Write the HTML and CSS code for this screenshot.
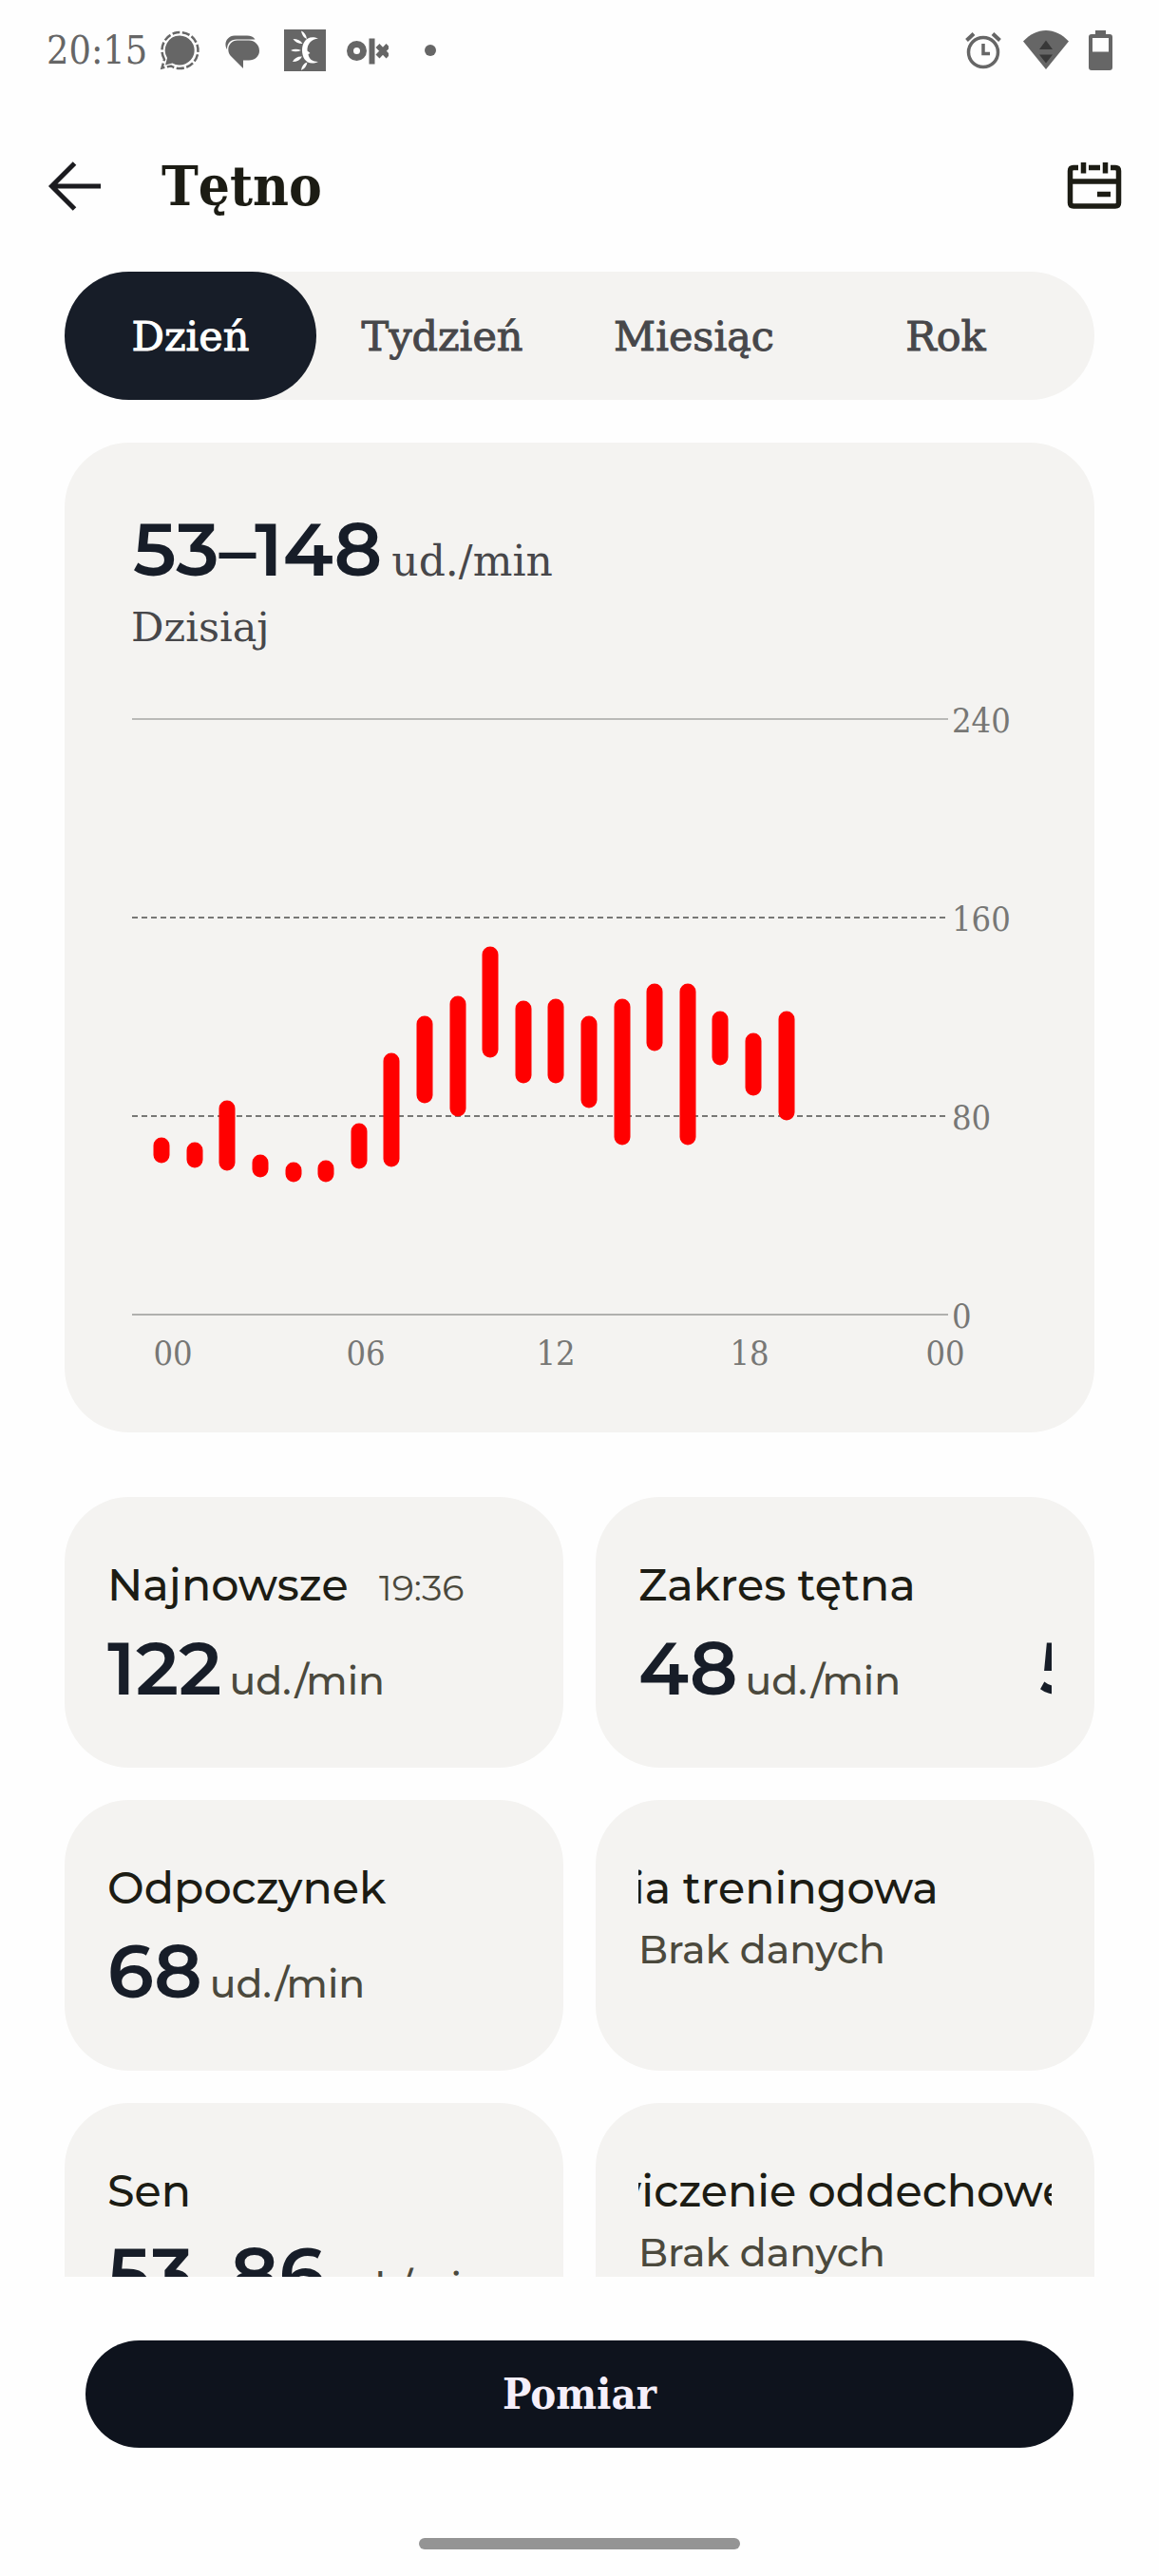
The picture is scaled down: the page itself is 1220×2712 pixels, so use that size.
FILE: index.html
```html
<!DOCTYPE html>
<html lang="pl">
<head>
<meta charset="utf-8">
<meta name="viewport" content="width=device-width, initial-scale=1">
<title>Tętno</title>
<link rel="stylesheet" href="styles.css">
</head>
<body>
<div class="status">
  <span class="clock">20:15</span>
  <div class="notices">
    <svg width="44" height="44" viewBox="0 0 44 44" aria-hidden="true">
      <path d="M22 6.500a15.500 15.500 0 1 1-7.500 29L7 37.500l2-7.500A15.500 15.500 0 0 1 22 6.500z" fill="#666"/>
      <path d="M6 31.500A19 19 0 1 1 13 38.500L3.500 40.500z" fill="none" stroke="#666" stroke-width="2.500" stroke-dasharray="8 2.500"/>
    </svg>
    <svg width="44" height="44" viewBox="0 0 44 44" aria-hidden="true">
      <path d="M6 21c-4-6 0-14.500 8-14.500h13c4 0 7 1.500 8.500 4H16c-6 0-10 4-10 10.500z" fill="#666"/>
      <path d="M17 11.500h12a11 11 0 0 1 11 11c0 6-5 10-11 10h-6V41L9.500 27.500C4.500 21 8.500 11.500 17 11.500z" fill="#666"/>
    </svg>
    <svg width="44" height="44" viewBox="0 0 44 44" aria-hidden="true">
      <path d="M0 0h44v44H0z" fill="#666"/>
      <path d="M36 9.500C24 5 19 14 19 22c0 9 6 17 17 12-6 0-10-3-10.500-8l2-1-3-2.500c-.5-7 4.500-12.500 11.500-13z" fill="#fff"/>
      <path d="M18 1.500q5 2 6 8.500-5-2-6-8.500zM9.500 10q7 0 10 5-7 0-10-5zM7 22q5-2.500 11 0-6 2.500-11 0zM9 34q3-6 10-5.500-3 5.500-10 5.500zM18 43q1-7 6.500-8.500-1 6-6.500 8.500z" fill="#fff"/>
    </svg>
    <svg width="44" height="44" viewBox="0 0 44 44" aria-hidden="true">
      <circle cx="10.500" cy="22.500" r="7" fill="none" stroke="#666" stroke-width="7"/>
      <path d="M26.500 9.500v27" stroke="#666" stroke-width="6"/>
      <path d="M32.500 17l11 11.500M43.500 17l-11 11.500" stroke="#666" stroke-width="5.500"/>
    </svg>
    <span class="more"></span>
  </div>
  <div class="system">
    <svg width="44" height="44" viewBox="0 0 44 44" aria-hidden="true">
      <g fill="none" stroke="#666"><circle cx="22" cy="24" r="15.500" stroke-width="3.500"/><path d="M22 15v10.500h7" stroke-width="3.500"/><path d="M4.500 11.500l7.500-7M39.500 11.500l-7.500-7" stroke-width="4"/></g>
    </svg>
    <svg width="50" height="44" viewBox="0 0 50 44" aria-hidden="true">
      <path d="M1 12.500c14-15.500 34-15.500 48 0L25 42z" fill="#666"/>
      <path d="M18 21l7-9.500L32 21zM18 26.500h14L25 35.500z" fill="#383838"/>
    </svg>
    <svg width="26" height="44" viewBox="0 0 26 44" aria-hidden="true">
      <path fill-rule="evenodd" d="M8 1h11v4h4q3 0 3 3v32q0 3-3 3H4q-3 0-3-3V8q0-3 3-3h4zM5 9v14.500h17V9z" fill="#666"/>
    </svg>
  </div>
</div>

<header class="appbar">
  <button class="icon-btn" type="button" aria-label="Wstecz">
    <svg width="60" height="60" viewBox="0 0 60 60" aria-hidden="true"><path d="M58 30H7M30.500 6L6.500 30l24 24" fill="none" stroke="#1b1b1f" stroke-width="5"/></svg>
  </button>
  <h1>Tętno</h1>
  <button class="icon-btn" type="button" aria-label="Kalendarz">
    <svg width="60" height="52" viewBox="0 0 60 52" aria-hidden="true"><g fill="none" stroke="#1c1c14" stroke-width="5.500"><path d="M13 6.500H8Q4.500 6.500 4.500 10v33.500Q4.500 47 8 47h44q3.500 0 3.500-3.500V10q0-3.500-3.500-3.500h-5M24 6.500h12"/><path d="M4.500 21h51M18.500 1v11.500M41.500 1v11.500M33 34.500h14"/></g></svg>
  </button>
</header>

<main class="content">
  <nav class="tabs" aria-label="Zakres czasu">
    <button class="tab active" type="button">Dzień</button>
    <button class="tab" type="button">Tydzień</button>
    <button class="tab" type="button">Miesiąc</button>
    <button class="tab" type="button">Rok</button>
  </nav>

  <section class="chart-card">
    <p class="range"><strong class="value">53–148</strong> <span class="range-unit">ud./min</span></p>
    <p class="day">Dzisiaj</p>
    <svg class="chart" viewBox="0 0 948 720" role="img" aria-label="Tętno w ciągu dnia">
      <g fill="none" stroke-width="2">
        <path d="M3 30h859" stroke="#b9b9b7"/>
        <path d="M3 239h856M3 448h856" stroke="#777775" stroke-dasharray="6 4"/>
        <path d="M3 657h859" stroke="#b0b0ae"/>
      </g>
      <g class="bars">
        <path d="M34 479v10M69 484v10M103 440v57M138 497v7M173 505v4M207 503v6M242 464v31M276 390v103M311 351v75M346 330v110M380 278v100M415 335v70M449 333v72M484 351v80M519 333v137M553 317v54M588 317v153M622 346v40M657 369v49M692 346v98"/>
      </g>
      <g class="axis">
        <text x="866" y="44">240</text><text x="866" y="253">160</text><text x="866" y="462">80</text><text x="866" y="671">0</text>
      </g>
      <g class="axis hours">
        <text x="46" y="710">00</text><text x="249" y="710">06</text><text x="449" y="710">12</text><text x="653" y="710">18</text><text x="859" y="710">00</text>
      </g>
    </svg>
  </section>

  <section class="stats">
    <article class="stat">
      <h2>Najnowsze <time>19:36</time></h2>
      <p class="reading"><strong class="value">122</strong> <span class="unit">ud./min</span></p>
    </article>
    <article class="stat">
      <h2>Zakres tętna</h2>
      <p class="reading"><strong class="value">48</strong> <span class="unit">ud./min</span> <strong class="value next">53</strong></p>
    </article>
    <article class="stat">
      <h2>Odpoczynek</h2>
      <p class="reading"><strong class="value">68</strong> <span class="unit">ud./min</span></p>
    </article>
    <article class="stat">
      <h2><span class="scrolled short">ia treningowa</span></h2>
      <p class="empty">Brak danych</p>
    </article>
    <article class="stat">
      <h2>Sen</h2>
      <p class="reading"><strong class="value">53–86</strong> <span class="unit">ud./min</span></p>
    </article>
    <article class="stat">
      <h2><span class="scrolled long">wiczenie oddechowe</span></h2>
      <p class="empty">Brak danych</p>
    </article>
  </section>
</main>

<footer class="footer">
  <button class="measure" type="button">Pomiar</button>
  <div class="handle"></div>
</footer>
</body>
</html>
```

FILE: styles.css
```css
* { box-sizing: border-box; }

body {
  margin: 0;
  height: 100vh;
  display: flex;
  flex-direction: column;
  background: #fefefe;
  color: #1c1c14;
  font-family: "Roboto Slab", "DejaVu Serif", serif;
}

h1, h2, p { margin: 0; font-weight: 400; }
button { border: 0; padding: 0; background: none; font: inherit; color: inherit; }
svg { display: block; flex: none; }

.clock, .appbar h1, .axis, .measure {
  font-family: "Roboto Slab", "DejaVu Serif Condensed", "DejaVu Serif", serif;
}

.status {
  flex: none;
  height: 106px;
  padding: 0 49px;
  display: flex;
  align-items: center;
  color: #666;
}
.clock { font-size: 41px; width: 118px; white-space: nowrap; }
.notices { display: flex; align-items: center; gap: 22px; }
.more { width: 12px; height: 12px; margin-left: 16px; border-radius: 50%; background: #666; }
.system { display: flex; align-items: center; gap: 19px; margin-left: auto; }

.appbar {
  flex: none;
  height: 180px;
  padding: 0 38px 0 48px;
  display: flex;
  align-items: center;
}
.appbar h1 { flex: 1; padding-left: 62px; font-size: 58px; font-weight: 700; }

.content { flex: 1; min-height: 0; overflow: hidden; padding: 0 68px; }

.tabs {
  display: grid;
  grid-template-columns: repeat(4, 1fr);
  height: 135px;
  padding-right: 24px;
  border-radius: 68px;
  background: #f4f3f1;
}
.tab { border-radius: 68px; font-size: 43px; color: #47474a; -webkit-text-stroke: 1px currentColor; }
.tab.active { background: #171d28; color: #fff; }

.chart-card {
  margin-top: 45px;
  padding: 66px 68px 61px;
  border-radius: 68px;
  background: #f4f3f1;
}
.value { font-family: Montserrat, Inter, sans-serif; font-size: 78px; font-weight: 600; color: #171d28; }
.range, .reading { display: flex; align-items: baseline; white-space: nowrap; }
.range { gap: 10px; line-height: 92px; padding-left: 4px; color: #47474a; }
.range-unit { font-size: 44px; line-height: 1; }
.day { margin-top: 6px; padding-left: 2px; font-size: 43px; line-height: 60px; color: #47474a; }
.chart { width: 100%; height: auto; margin-top: 37px; }
.bars { fill: none; stroke: #f00; stroke-width: 17px; stroke-linecap: round; }
.axis { font-size: 36px; fill: #777775; }
.hours { text-anchor: middle; }

.stats {
  display: grid;
  grid-template-columns: repeat(2, minmax(0, 1fr));
  gap: 34px;
  margin-top: 68px;
  font-family: Montserrat, Inter, sans-serif;
}
.stat { height: 285px; padding: 60px 45px 0; border-radius: 68px; background: #f4f3f1; }
.stat h2 { font-size: 46px; font-weight: 500; line-height: 66px; white-space: nowrap; overflow: hidden; }
.stat time { margin-left: 20px; font-size: 38px; font-weight: 400; line-height: 1; color: #4b493d; }
.reading { gap: 8px; line-height: 108px; overflow: hidden; }
.unit, .empty { font-size: 41px; font-weight: 500; color: #4b493d; }
.unit { line-height: 1; }
.empty { line-height: 62px; }
.next { margin-left: 138px; }
.short { margin-left: -6px; }
.long { margin-left: -38px; }

.footer {
  flex: none;
  padding: 67px 90px 28px;
  display: flex;
  flex-direction: column;
  align-items: center;
  gap: 95px;
}
.measure {
  width: 100%;
  height: 113px;
  border-radius: 57px;
  background: #0e131d;
  color: #f5effa;
  font-size: 45px;
  font-weight: 700;
}
.handle { width: 338px; height: 12px; border-radius: 6px; background: #949494; }
```
